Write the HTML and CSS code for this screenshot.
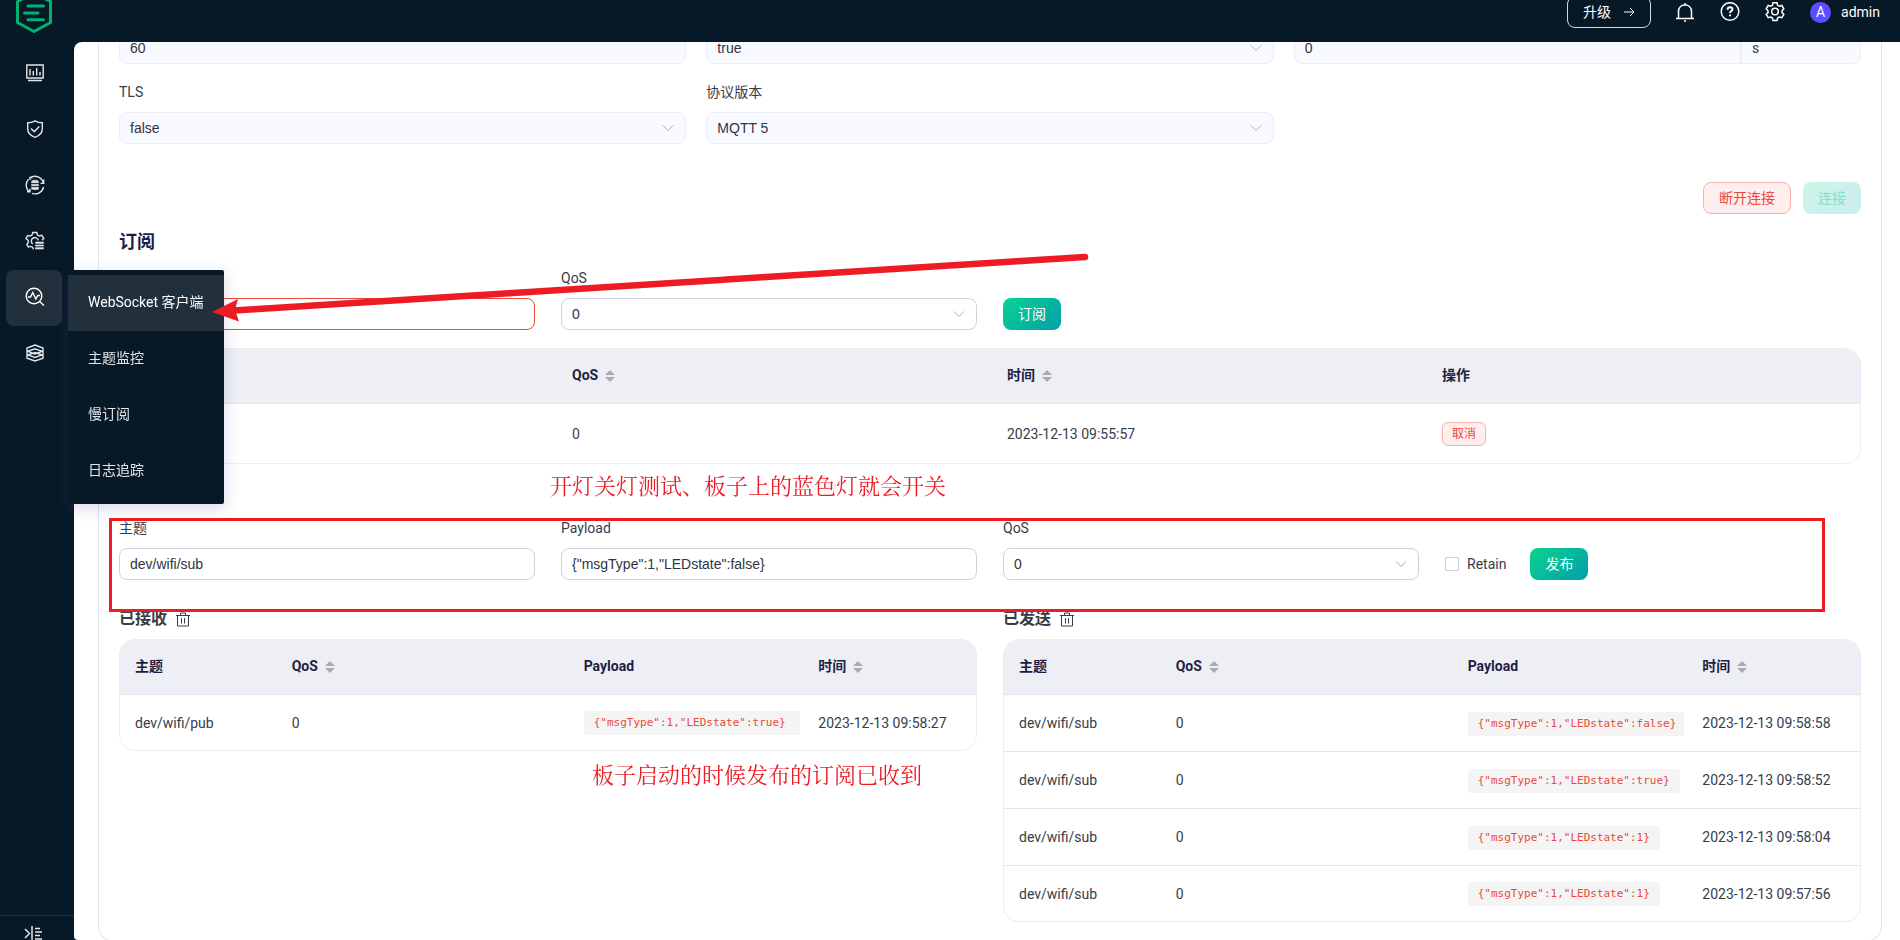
FILE: index.html
```html
<!DOCTYPE html>
<html lang="zh-CN">
<head>
<meta charset="utf-8">
<meta name="viewport" content="width=device-width, initial-scale=1">
<title>WebSocket 客户端</title>
<link rel="stylesheet" href="styles.css">
</head>
<body>
<svg class="defs" aria-hidden="true">
  <symbol id="i-chevron" viewBox="0 0 12 12"><path d="M1 3.5 6 8.5 11 3.5"/></symbol>
  <symbol id="i-sort" viewBox="0 0 10 12"><path d="M5 0 10 5H0zM5 12 0 7H10z"/></symbol>
  <symbol id="i-trash" viewBox="0 0 14 15"><path d="M0 3.500h14M4.500 3V1h5V3M1.500 3.500v10.500h11V3.500M5.500 6v5.500M8.500 6v5.500"/></symbol>
</svg>
<div class="app">
  <header class="topbar">
    <a class="logo" href="#" aria-label="首页">
      <svg width="38" height="42" viewBox="0 0 38 42"><path d="M19 2 35.500 10.500V31.500L19 40.500 2.500 31.500V10.500z"/><path d="M13 15H28.500M9.500 22H23M13 28.700H28.500"/></svg>
    </a>
    <div class="tools">
      <button class="upgrade" type="button">升级
        <svg width="12" height="12" viewBox="0 0 12 12"><path d="M1 6h10M7 2l4 4-4 4"/></svg>
      </button>
      <button class="tool" type="button" aria-label="通知">
        <svg width="20" height="20" viewBox="0 0 20 20"><path d="M3.500 16V9.500C3.500 5.500 6.300 3 10 3s6.500 2.500 6.500 6.500V16M1 16.500h18M10 1v2M9 19h2"/></svg>
      </button>
      <button class="tool" type="button" aria-label="帮助">
        <svg width="20" height="20" viewBox="0 0 20 20"><circle cx="10" cy="9.500" r="8.800"/><path class="bold" d="M7.600 7.700C7.600 6.100 8.600 5.300 10 5.300s2.400.8 2.400 2.100c0 1.700-2.400 1.800-2.400 3.600M10 12.500v1.700"/></svg>
      </button>
      <button class="tool" type="button" aria-label="设置">
        <svg width="20" height="20" viewBox="0 0 20 20"><circle cx="10" cy="9.500" r="3.300"/><path d="M8 .8h4l.6 2.500 1.700 1 2.500-.8 2 3.400-1.800 1.800v1.900l1.800 1.700-2 3.400-2.500-.7-1.700 1-.6 2.400H8l-.6-2.400-1.700-1-2.500.7-2-3.400L3 10.600V8.700L1.200 6.900l2-3.400 2.500.8 1.700-1z"/></svg>
      </button>
      <a class="user" href="#"><span class="avatar">A</span>admin</a>
    </div>
  </header>

  <nav class="sidebar" aria-label="主导航">
    <a class="nav-item" href="#" aria-label="监控"><svg width="18" height="18" viewBox="0 0 18 18"><path d="M.8 1h16.400v13H.8zM2 16.500h14M4 5v6.500M7.300 7v4.500M10.700 4v7.500M14 8v3.500"/></svg></a>
    <a class="nav-item" href="#" aria-label="访问控制"><svg width="18" height="18" viewBox="0 0 18 18"><path d="M9 .8c2 1.300 4.500 2 7.300 2v6c0 4-2.800 7-7.300 8.500C4.500 15.800 1.700 12.800 1.700 8.800v-6c2.800 0 5.300-.7 7.300-2zM5 8.500l3.200 3.200L13.300 6.500"/></svg></a>
    <a class="nav-item" href="#" aria-label="集成"><svg width="20" height="20" viewBox="0 0 20 20"><path d="M5 2.700A8.700 8.700 0 0 1 18.300 8M18.600 12A8.700 8.700 0 0 1 7 18.300M4.500 17A8.700 8.700 0 0 1 3.500 4.300M18.700 4.500V8.400H15.500M2 16.800h3v-3M5 5V2.500h2.500"/><path class="fill" d="M6 6.500c0-2.200 8-2.200 8 0v1.800H6zM6 8.800h8v2.500H6zM6 11.800h8v2.500c-1 1.200-7 1.200-8 0z"/></svg></a>
    <a class="nav-item" href="#" aria-label="管理"><svg width="20" height="20" viewBox="0 0 20 20"><path d="M8.500 18.200 7.600 16.200 5.700 15.400 3.400 16 1.800 13.500 3.200 11.700V9.300L1 7.500 2.800 4.500 5.400 5 7 4 7.800 1.500h4L12.500 4l1.800 1 2.500-.6 2 3.100L17 9.300M7.700 13A3.600 3.600 0 1 1 13.400 9.300"/><path class="fill" d="M10 10.500h9v2.600h-9zM10 13.300h9v2.400h-9zM10 16h9v2.600h-9z"/></svg></a>
    <a class="nav-item active" href="#" aria-label="问题分析"><svg width="20" height="20" viewBox="0 0 20 20"><circle cx="9" cy="9" r="7.800"/><path d="M14.800 14.800 19 18.500M3 10h2.500L7.800 5.500l3 6.500 2-3.500H15"/></svg></a>
    <a class="nav-item" href="#" aria-label="系统设置"><svg width="18" height="18" viewBox="0 0 18 18"><path d="M9 1 17 4v3L9 10 1 7V4zM9 4.800l8 2.800v3L9 13.500 1 10.600v-3zM9 8.500l8 2.800v2.900L9 17l-8-2.800v-2.900z"/></svg></a>
    <ul class="submenu">
      <li><a class="current" href="#">WebSocket 客户端</a></li>
      <li><a href="#">主题监控</a></li>
      <li><a href="#">慢订阅</a></li>
      <li><a href="#">日志追踪</a></li>
    </ul>
    <button class="collapse" type="button" aria-label="展开菜单"><svg width="18" height="16" viewBox="0 0 18 16"><path d="M1 3l4.500 4.500L1 12M8 0v16M11 2.500h5M11 6h7M11 9.500h5M11 13h7"/></svg></button>
  </nav>

  <main class="main">
    <section class="card">
      <form class="connection">
        <input class="control" aria-label="Keep Alive" value="60" disabled>
        <div class="select"><select class="control" aria-label="Clean Session" disabled><option>true</option></select><svg><use href="#i-chevron"/></svg></div>
        <div class="with-unit"><input class="control" aria-label="会话过期间隔" value="0" disabled><span class="unit">s</span></div>
        <div class="field"><label for="tls">TLS</label><div class="select"><select class="control" id="tls" disabled><option>false</option></select><svg><use href="#i-chevron"/></svg></div></div>
        <div class="field"><label for="ver">协议版本</label><div class="select"><select class="control" id="ver" disabled><option>MQTT 5</option></select><svg><use href="#i-chevron"/></svg></div></div>
      </form>
      <div class="actions">
        <button class="btn danger" type="button">断开连接</button>
        <button class="btn primary" type="button" disabled>连接</button>
      </div>

      <h2 class="title">订阅</h2>
      <form class="quad subscribe">
        <div class="field"><label for="st">主题</label><input class="control error" id="st"></div>
        <div class="field"><label for="sq">QoS</label><div class="select"><select class="control" id="sq"><option>0</option></select><svg><use href="#i-chevron"/></svg></div></div>
        <div class="inline"><button class="btn primary" type="button">订阅</button></div>
      </form>
      <div class="table-box subs">
        <table>
          <thead><tr><th>主题</th><th>QoS<svg><use href="#i-sort"/></svg></th><th>时间<svg><use href="#i-sort"/></svg></th><th>操作</th></tr></thead>
          <tbody><tr><td></td><td>0</td><td>2023-12-13 09:55:57</td><td><button class="btn danger small" type="button">取消</button></td></tr></tbody>
        </table>
      </div>

      <form class="quad publish">
        <div class="field"><label for="pt">主题</label><input class="control" id="pt" value="dev/wifi/sub"></div>
        <div class="field"><label for="pp">Payload</label><input class="control" id="pp" value='{"msgType":1,"LEDstate":false}'></div>
        <div class="field"><label for="pq">QoS</label><div class="select"><select class="control" id="pq"><option>0</option></select><svg><use href="#i-chevron"/></svg></div></div>
        <div class="inline"><label class="check"><input type="checkbox">Retain</label><button class="btn primary" type="button">发布</button></div>
      </form>

      <div class="logs">
        <section>
          <h3 class="log-title">已接收<button type="button" aria-label="清空已接收"><svg><use href="#i-trash"/></svg></button></h3>
          <div class="table-box messages">
            <table>
              <thead><tr><th class="c-topic">主题</th><th class="c-qos">QoS<svg><use href="#i-sort"/></svg></th><th class="c-payload">Payload</th><th>时间<svg><use href="#i-sort"/></svg></th></tr></thead>
              <tbody><tr><td>dev/wifi/pub</td><td>0</td><td><code class="wide">{"msgType":1,"LEDstate":true}</code></td><td>2023-12-13 09:58:27</td></tr></tbody>
            </table>
          </div>
        </section>
        <section>
          <h3 class="log-title">已发送<button type="button" aria-label="清空已发送"><svg><use href="#i-trash"/></svg></button></h3>
          <div class="table-box messages">
            <table>
              <thead><tr><th class="c-topic">主题</th><th class="c-qos">QoS<svg><use href="#i-sort"/></svg></th><th class="c-payload">Payload</th><th>时间<svg><use href="#i-sort"/></svg></th></tr></thead>
              <tbody>
                <tr><td>dev/wifi/sub</td><td>0</td><td><code class="wide">{"msgType":1,"LEDstate":false}</code></td><td>2023-12-13 09:58:58</td></tr>
                <tr><td>dev/wifi/sub</td><td>0</td><td><code>{"msgType":1,"LEDstate":true}</code></td><td>2023-12-13 09:58:52</td></tr>
                <tr><td>dev/wifi/sub</td><td>0</td><td><code>{"msgType":1,"LEDstate":1}</code></td><td>2023-12-13 09:58:04</td></tr>
                <tr><td>dev/wifi/sub</td><td>0</td><td><code>{"msgType":1,"LEDstate":1}</code></td><td>2023-12-13 09:57:56</td></tr>
              </tbody>
            </table>
          </div>
        </section>
      </div>
    </section>
  </main>

  <svg class="arrow" width="880" height="70" viewBox="0 0 880 70"><path class="shaft" d="M22 58.500 873 5"/><path class="head" d="M0 60 26 47 23 58 27 69.500z"/></svg>
  <div class="frame"></div>
  <p class="note note-lights">开灯关灯测试、板子上的蓝色灯就会开关</p>
  <p class="note note-received">板子启动的时候发布的订阅已收到</p>
</div>
</body>
</html>
```

FILE: styles.css
```css
* { box-sizing: border-box; }
body {
  margin: 0;
  background: #071826;
  color: #383c48;
  font: 14px/24px Roboto, "Noto Sans CJK SC", sans-serif;
}
a { color: inherit; text-decoration: none; }
button, input, select { font: inherit; color: inherit; }
button { cursor: pointer; }
h2, h3, p, ul { margin: 0; padding: 0; }
svg { fill: none; stroke: currentColor; flex: none; }
.defs { position: absolute; width: 0; height: 0; }

.app {
  position: relative;
  display: grid;
  grid-template: 42px minmax(0, 1fr) / 74px minmax(0, 1fr);
  height: 100vh;
  overflow: hidden;
}

/* Top bar */
.topbar {
  grid-column: 1 / -1;
  display: flex;
  align-items: center;
  justify-content: space-between;
  height: 24px;
  padding: 0 20px 0 15px;
  color: #fff;
}
.logo { display: flex; color: #00b173; }
.logo svg { stroke-width: 3; stroke-linecap: round; stroke-linejoin: round; }
.tools { display: flex; align-items: center; }
.upgrade {
  display: flex;
  align-items: center;
  gap: 12px;
  height: 32px;
  margin-right: 24px;
  padding: 0 15px;
  border: 1px solid #d5d9dd;
  border-radius: 8px;
  background: none;
}
.tool { display: flex; margin-right: 25px; padding: 0; border: 0; background: none; }
.tool svg { stroke-width: 1.500; }
.tool .bold { stroke-width: 2; }
.user { display: flex; align-items: center; gap: 10px; }
.avatar {
  width: 21px;
  height: 21px;
  border-radius: 50%;
  background: #5b4cff;
  line-height: 21px;
  text-align: center;
}

/* Side navigation */
.sidebar {
  position: relative;
  display: flex;
  flex-direction: column;
  padding-top: 4px;
  color: #e3e6e8;
}
.nav-item {
  display: flex;
  align-items: center;
  justify-content: center;
  width: 56px;
  height: 56px;
  margin-left: 6px;
  padding: 0 0 2px 1px;
  border-radius: 8px;
}
.nav-item svg { stroke-width: 1.400; }
.nav-item .fill { fill: currentColor; stroke: #071826; stroke-width: 0.500; }
.nav-item.active { background: #22303c; color: #fff; }
.submenu {
  position: absolute;
  z-index: 2;
  top: 228px;
  left: 68px;
  width: 156px;
  padding: 5px 0;
  border-radius: 2px;
  background: #071826;
  box-shadow: 0 4px 16px rgba(70, 80, 150, .22);
  list-style: none;
}
.submenu a { display: block; padding: 0 20px 2px; line-height: 54px; white-space: nowrap; }
.submenu .current { background: #22303c; color: #fff; }
.collapse {
  display: flex;
  height: 25px;
  margin-top: auto;
  padding: 10px 0 0 24px;
  border: 0;
  border-top: 1px solid #26343f;
  background: none;
  overflow: hidden;
}
.collapse svg { stroke-width: 1.500; }

/* Page body */
.main {
  padding: 0 18px 0 24px;
  border-radius: 8px 0 0 4px;
  background: #fff;
  overflow: auto;
  scrollbar-width: none;
}
.card {
  padding: 0 20px 19px;
  border: 1px solid #e1e4ee;
  border-top: 0;
  border-radius: 0 0 16px 16px;
}
.connection {
  display: grid;
  grid-template-columns: repeat(3, minmax(0, 1fr));
  gap: 16px 20px;
  margin-top: -10px;
}
.quad { display: grid; grid-template-columns: repeat(4, minmax(0, 1fr)); gap: 26px; }
.field { display: flex; flex-direction: column; gap: 8px; }
.control {
  width: 100%;
  height: 32px;
  padding: 0 10px;
  border: 1px solid #d0d3e0;
  border-radius: 8px;
  background: #fff;
  color: #30343f;
  font-family: "Liberation Sans", "Noto Sans CJK SC", sans-serif;
  outline: 0;
  appearance: none;
}
.control:disabled { border-color: #ebecf5; background: #f9faff; opacity: 1; }
.control.error { border-color: #e94b3c; }
.select { position: relative; display: flex; }
.select svg {
  position: absolute;
  top: 10px;
  right: 12px;
  width: 12px;
  height: 12px;
  color: #a8abb2;
  pointer-events: none;
}
.with-unit { display: flex; }
.with-unit .control { flex: 1; border-radius: 8px 0 0 8px; }
.unit {
  width: 120px;
  padding: 3px 10px;
  border: 1px solid #ebecf5;
  border-radius: 0 8px 8px 0;
  background: #f9faff;
}
.btn {
  height: 32px;
  padding: 0 15px;
  border: 0;
  border-radius: 8px;
  white-space: nowrap;
}
.btn.primary { background: linear-gradient(137deg, #0ad38f, #029fa9); color: #fff; }
.btn.primary:disabled { background: linear-gradient(137deg, #cdf5e8, #ccecee); color: #8adfc5; }
.btn.danger { border: 1px solid #f9b0b0; background: #ffeeee; color: #ea4a3b; }
.btn.small { height: 24px; padding: 0 9px; border-radius: 6px; font-size: 12px; line-height: 20px; }
.actions { display: flex; justify-content: flex-end; gap: 12px; margin-top: 38px; }
.title { margin-top: 15px; color: #1d1f45; font-size: 18px; line-height: 26px; }
.subscribe { margin-top: 11px; }
.publish { margin-top: 52px; }
.inline { display: flex; align-items: flex-end; gap: 24px; }
.check { display: flex; align-items: center; gap: 8px; height: 32px; }
.check input {
  width: 14px;
  height: 14px;
  margin: 0;
  border: 1px solid #d0d3e0;
  border-radius: 2px;
  background: #fff;
  appearance: none;
}

/* Tables */
.table-box { border: 1px solid #ecedf4; border-radius: 16px; overflow: hidden; }
.subs { margin-top: 18px; }
table { width: 100%; border-spacing: 0; table-layout: fixed; }
th, td { padding: 0 16px; text-align: left; white-space: nowrap; }
th {
  height: 55px;
  padding-bottom: 2px;
  border-bottom: 1px solid #e1e5f0;
  background: #eeeff5;
  color: #1d1f45;
}
th svg { width: 10px; height: 12px; margin-left: 7px; vertical-align: -2px; color: #a8abb2; fill: currentColor; stroke: none; }
td { height: 57px; border-bottom: 1px solid #e1e5f0; }
tr:last-child td { height: 55px; border-bottom: 0; }
.subs th, .subs td { padding-left: 17px; }
.subs tr:last-child td { height: 59px; }
.messages th:first-child, .messages td:first-child,
.messages th:nth-child(2), .messages td:nth-child(2) { padding-left: 15px; }
.messages th:last-child, .messages td:last-child { padding-left: 17px; }
.c-topic { width: 18.300%; }
.c-qos { width: 34%; }
.c-payload { width: 27.300%; }
td:has(code) { padding-right: 2px; }
code {
  display: inline-block;
  padding: 0 10px;
  border-radius: 4px;
  background: #f4f4f4;
  color: #ea4a3b;
  font: 11px/24px "DejaVu Sans Mono", monospace;
  vertical-align: middle;
}
code.wide { width: 216px; border-radius: 4px 0 0 4px; }
.logs { display: grid; grid-template-columns: repeat(2, minmax(0, 1fr)); gap: 26px; margin-top: 27px; }
.log-title { display: flex; align-items: center; gap: 9px; margin-bottom: 8px; font-size: 16px; font-weight: 600; }
.log-title button { display: flex; padding: 0; border: 0; background: none; }
.log-title svg { width: 14px; height: 15px; }

/* Annotations over the page */
.arrow { position: absolute; z-index: 3; top: 252px; left: 212px; color: #ed1c24; pointer-events: none; }
.arrow .shaft { stroke-width: 6.500; stroke-linecap: round; }
.arrow .head { fill: currentColor; stroke: none; }
.frame { position: absolute; top: 518px; left: 109px; right: 75px; height: 94px; border: 3px solid #ed1c24; pointer-events: none; }
.note { position: absolute; color: #ed1c24; font: 22px/32px "Noto Serif CJK SC", "Noto Sans CJK SC", serif; white-space: nowrap; }
.note-lights { top: 469px; left: 550px; }
.note-received { top: 758px; left: 592px; }
```
